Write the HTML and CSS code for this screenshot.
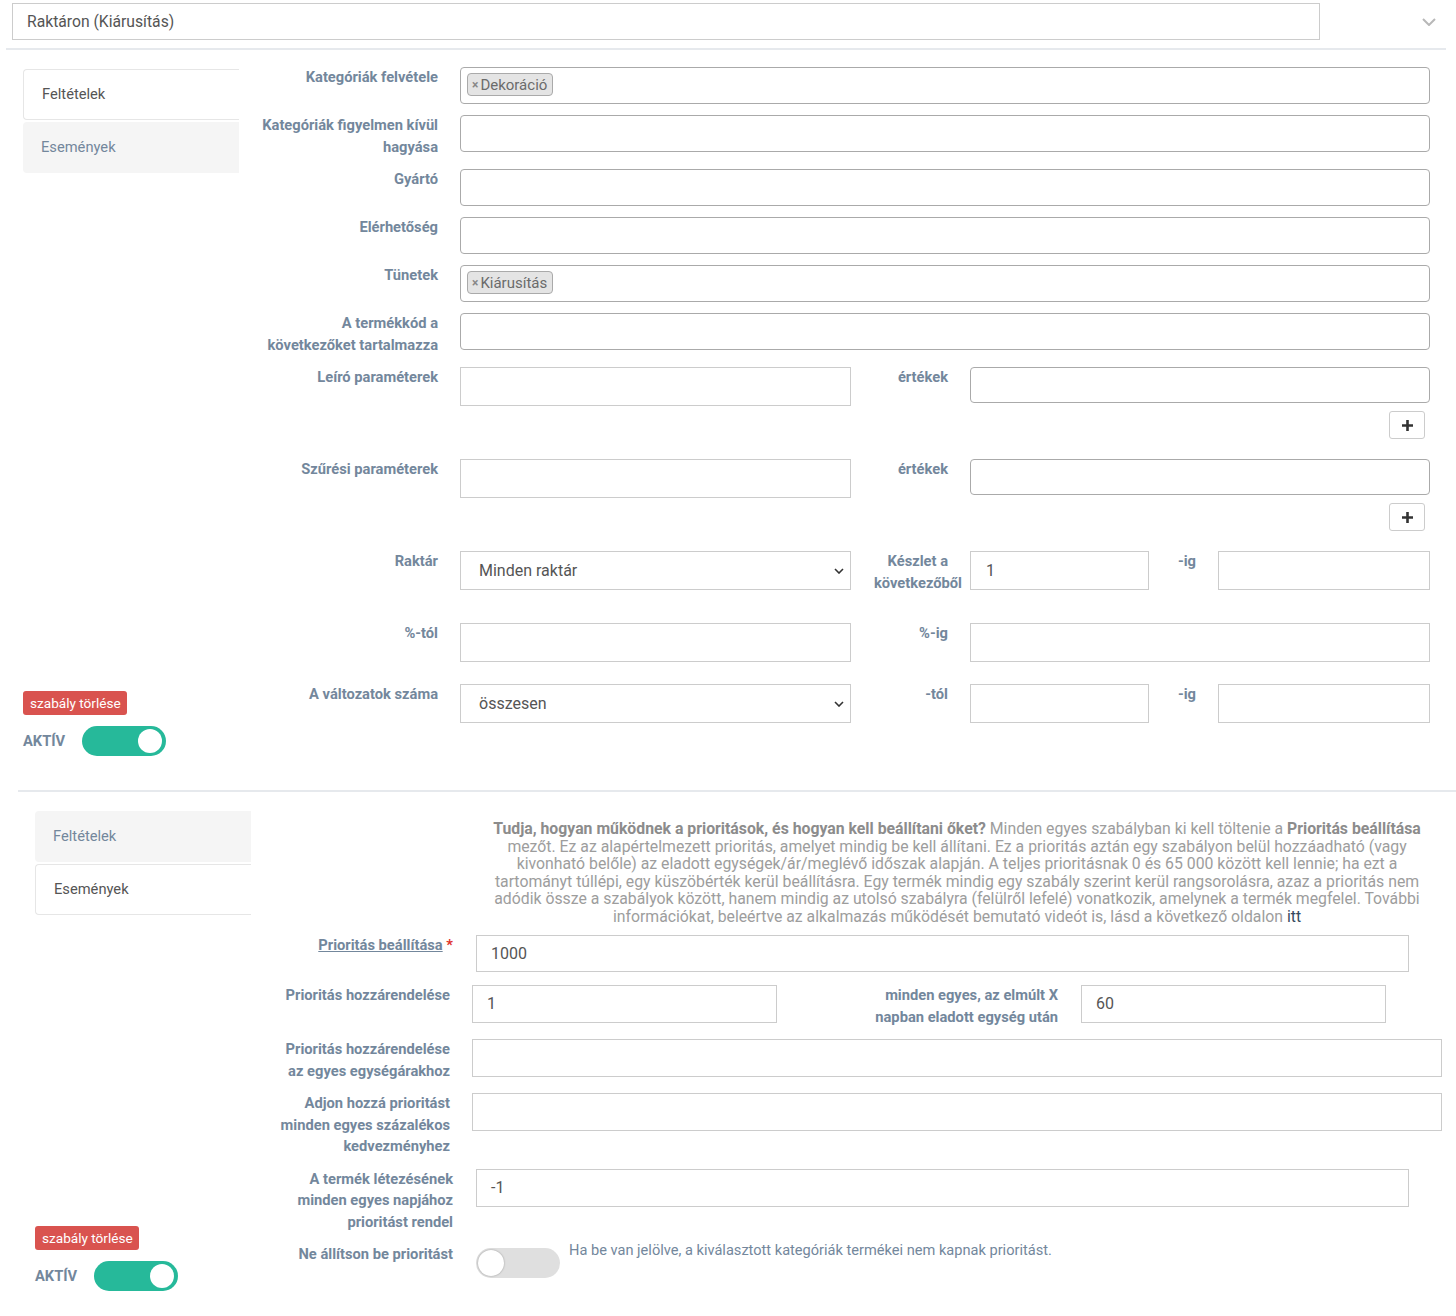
FILE: index.html
```html
<!DOCTYPE html>
<html lang="hu">
<head>
<meta charset="utf-8">
<title>Szabályok</title>
<link rel="stylesheet" href="styles.css">
</head>
<body>
<div class="head">
  <div class="head-input">Raktáron (Kiárusítás)</div>
  <svg class="head-chevron" width="14" height="8" viewBox="0 0 14 8"><path d="M1 1l6 6 6-6" fill="none" stroke="#b8b8b8" stroke-width="2"/></svg>
</div>

<section class="rule rule-1">
  <aside class="side">
    <div class="tabs">
      <div class="tab active">Feltételek</div>
      <div class="tab">Események</div>
    </div>
    <div class="side-bottom">
      <span class="btn-del">szabály törlése</span>
      <div class="aktiv"><span class="aktiv-lbl">AKTÍV</span><span class="switch on"></span></div>
    </div>
  </aside>
  <div class="form form-1">
    <div class="row">
      <div class="lbl">Kategóriák felvétele</div>
      <div class="s2"><span class="tag"><span class="tag-x">×</span>Dekoráció</span></div>
    </div>
    <div class="row">
      <div class="lbl">Kategóriák figyelmen kívül hagyása</div>
      <div class="s2"></div>
    </div>
    <div class="row">
      <div class="lbl">Gyártó</div>
      <div class="s2"></div>
    </div>
    <div class="row">
      <div class="lbl">Elérhetőség</div>
      <div class="s2"></div>
    </div>
    <div class="row">
      <div class="lbl">Tünetek</div>
      <div class="s2"><span class="tag"><span class="tag-x">×</span>Kiárusítás</span></div>
    </div>
    <div class="row">
      <div class="lbl">A termékkód a következőket tartalmazza</div>
      <div class="s2"></div>
    </div>
    <div class="row row-param">
      <div class="lbl">Leíró paraméterek</div>
      <div class="split">
        <div class="fc"></div>
        <div class="sub-lbl">értékek</div>
        <div class="vals">
          <div class="s2 s2-36"></div>
          <span class="add-btn"><svg width="11" height="11" viewBox="0 0 11 11"><path d="M5.5 0v11M0 5.5h11" stroke="#333" stroke-width="2.6"/></svg></span>
        </div>
      </div>
    </div>
    <div class="row row-param">
      <div class="lbl">Szűrési paraméterek</div>
      <div class="split">
        <div class="fc"></div>
        <div class="sub-lbl">értékek</div>
        <div class="vals">
          <div class="s2 s2-36"></div>
          <span class="add-btn"><svg width="11" height="11" viewBox="0 0 11 11"><path d="M5.5 0v11M0 5.5h11" stroke="#333" stroke-width="2.6"/></svg></span>
        </div>
      </div>
    </div>
    <div class="row row-stock">
      <div class="lbl">Raktár</div>
      <div class="split5">
        <div class="fc sel">Minden raktár<svg width="10" height="6" viewBox="0 0 10 6"><path d="M1 1l4 4 4-4" fill="none" stroke="#333" stroke-width="1.6"/></svg></div>
        <div class="sub-lbl">Készlet a következőből</div>
        <div class="fc val">1</div>
        <div class="sub-lbl">-ig</div>
        <div class="fc"></div>
      </div>
    </div>
    <div class="row row-pct">
      <div class="lbl">%-tól</div>
      <div class="split">
        <div class="fc"></div>
        <div class="sub-lbl">%-ig</div>
        <div class="fc"></div>
      </div>
    </div>
    <div class="row row-last">
      <div class="lbl">A változatok száma</div>
      <div class="split5">
        <div class="fc sel">összesen<svg width="10" height="6" viewBox="0 0 10 6"><path d="M1 1l4 4 4-4" fill="none" stroke="#333" stroke-width="1.6"/></svg></div>
        <div class="sub-lbl">-tól</div>
        <div class="fc"></div>
        <div class="sub-lbl">-ig</div>
        <div class="fc"></div>
      </div>
    </div>
  </div>
</section>

<div class="sep"></div>

<section class="rule rule-2">
  <aside class="side">
    <div class="tabs">
      <div class="tab">Feltételek</div>
      <div class="tab active">Események</div>
    </div>
    <div class="side-bottom">
      <span class="btn-del">szabály törlése</span>
      <div class="aktiv"><span class="aktiv-lbl">AKTÍV</span><span class="switch on"></span></div>
    </div>
  </aside>
  <div class="form form-2">
    <p class="info"><b>Tudja, hogyan működnek a prioritások, és hogyan kell beállítani őket?</b> Minden egyes szabályban ki kell töltenie a <b>Prioritás beállítása</b> mezőt. Ez az alapértelmezett prioritás, amelyet mindig be kell állítani. Ez a prioritás aztán egy szabályon belül hozzáadható (vagy kivonható belőle) az eladott egységek/ár/meglévő időszak alapján. A teljes prioritásnak 0 és 65 000 között kell lennie; ha ezt a tartományt túllépi, egy küszöbérték kerül beállításra. Egy termék mindig egy szabály szerint kerül rangsorolásra, azaz a prioritás nem adódik össze a szabályok között, hanem mindig az utolsó szabályra (felülről lefelé) vonatkozik, amelynek a termék megfelel. További információkat, beleértve az alkalmazás működését bemutató videót is, lásd a következő oldalon <a class="info-link" href="#">itt</a></p>
    <div class="row inset row-first">
      <div class="lbl"><span class="u">Prioritás beállítása</span> <span class="req">*</span></div>
      <div class="fc h37">1000</div>
    </div>
    <div class="row">
      <div class="lbl">Prioritás hozzárendelése</div>
      <div class="split-b">
        <div class="fc h38">1</div>
        <div class="sub-lbl sub-wide">minden egyes, az elmúlt X napban eladott egység után</div>
        <div class="fc h38">60</div>
      </div>
    </div>
    <div class="row">
      <div class="lbl">Prioritás hozzárendelése az egyes egységárakhoz</div>
      <div class="fc h38"></div>
    </div>
    <div class="row">
      <div class="lbl">Adjon hozzá prioritást minden egyes százalékos kedvezményhez</div>
      <div class="fc h38"></div>
    </div>
    <div class="row inset">
      <div class="lbl">A termék létezésének minden egyes napjához prioritást rendel</div>
      <div class="fc h38">-1</div>
    </div>
    <div class="row inset row-end">
      <div class="lbl">Ne állítson be prioritást</div>
      <div class="toggle-line">
        <span class="switch off"></span>
        <span class="help">Ha be van jelölve, a kiválasztott kategóriák termékei nem kapnak prioritást.</span>
      </div>
    </div>
  </div>
</section>
</body>
</html>
```

FILE: styles.css
```css
* { box-sizing: border-box; }

body {
  margin: 0;
  width: 1456px;
  background: #fff;
  font-family: Roboto, "Helvetica Neue", Arial, sans-serif;
  color: #73879C;
}

/* header */
.head {
  display: flex;
  align-items: center;
  width: 1440px;
  margin-left: 6px;
  padding: 3px 0 8px 6px;
  border-bottom: 2px solid #E6E9ED;
}
.head-input {
  width: 1308px;
  height: 37px;
  border: 1px solid #ccc;
  padding: 0 14px;
  font-size: 15.7px;
  line-height: 35px;
  color: #555;
}
.head-chevron { margin-left: auto; margin-right: 10px; }

/* rule sections */
.rule { display: flex; }
.rule-1 { margin-top: 17px; padding-left: 23px; }
.rule-2 { margin-top: 17px; padding-left: 35px; }

.sep {
  width: 1438px;
  margin: 34px 0 0 18px;
  border-top: 2px solid #E6E9ED;
}

/* sidebar */
.side {
  width: 216px;
  flex: none;
  display: flex;
  flex-direction: column;
}
.tabs {
  margin-top: 2px;
  display: flex;
  flex-direction: column;
  gap: 2px;
}
.tab {
  height: 51px;
  padding-left: 18px;
  font-size: 14.7px;
  line-height: 51px;
  background: #f5f5f5;
  color: #73879C;
  border-radius: 4px 0 0 4px;
}
.tab.active {
  background: #fff;
  color: #555;
  border: 1px solid #e6e6e6;
  border-right: none;
  line-height: 49px;
}
.side-bottom { margin-top: auto; }
.btn-del {
  display: inline-block;
  height: 24px;
  padding: 0 6px 0 7px;
  background: #d9534f;
  border-radius: 3px;
  color: #fff;
  font-size: 13.6px;
  line-height: 24px;
}
.aktiv {
  display: flex;
  align-items: center;
  gap: 17px;
  margin-top: 11px;
}
.aktiv-lbl { font-weight: 700; font-size: 14.7px; color: #73879C; }

.switch {
  position: relative;
  display: inline-block;
  width: 84px;
  height: 30px;
  border-radius: 15px;
  flex: none;
}
.switch.on { background: #26B99A; }
.switch.on::after {
  content: "";
  position: absolute;
  top: 3px;
  right: 4px;
  width: 24px;
  height: 24px;
  border-radius: 50%;
  background: #fff;
}
.switch.off { background: #dfdfdf; }
.switch.off::after {
  content: "";
  position: absolute;
  top: 2px;
  left: 2px;
  width: 26px;
  height: 26px;
  border-radius: 50%;
  background: #fff;
  box-shadow: 0 0 2px rgba(0,0,0,.35);
}

/* form */
.form { width: 1191px; }
.form-1 { padding-bottom: 33px; }
.form-2 { padding-bottom: 13px; }

.row {
  display: grid;
  grid-template-columns: 199px 970px;
  column-gap: 22px;
  align-items: start;
  margin-bottom: 11px;
}
.row.inset {
  grid-template-columns: 202px 933px;
  column-gap: 23px;
}
.row.inset .lbl { padding-left: 18px; }
.row-param { margin-bottom: 20px; }
.row-stock { margin-bottom: 29px; }
.row-pct { margin-bottom: 22px; }
.row-last { margin-bottom: 0; }
.row-first { margin-bottom: 13px; }
.row-end { margin-bottom: 0; }

.lbl, .sub-lbl {
  font-weight: 700;
  font-size: 14.7px;
  line-height: 21.5px;
  color: #73879C;
  text-align: right;
}
.lbl { padding-left: 20px; }
.sub-lbl { padding: 0 22px 0 23px; }
.sub-wide { padding: 0 23px 0 97px; }

.u { text-decoration: underline; }
.req { color: #e0312b; }

.split {
  display: grid;
  grid-template-columns: 391px 119px 460px;
  align-items: start;
}
.split5 {
  display: grid;
  grid-template-columns: 391px 119px 179px 69px 212px;
  align-items: start;
}
.split-b {
  display: grid;
  grid-template-columns: 305px 304px 305px;
  align-items: start;
}

/* inputs */
.s2 {
  height: 37px;
  border: 1px solid #aaa;
  border-radius: 4px;
  background: #fff;
  padding: 5px 6px;
}
.s2-36 { height: 36px; width: 100%; }
.tag {
  display: inline-flex;
  align-items: center;
  height: 23px;
  padding: 0 5px 0 4px;
  background: #e4e4e4;
  border: 1px solid #aaa;
  border-radius: 4px;
  font-size: 15px;
  color: #6b6b6b;
}
.tag-x {
  font-weight: 700;
  font-size: 12px;
  color: #888;
  margin-right: 2px;
}

.fc {
  height: 39px;
  border: 1px solid #ccc;
  background: #fff;
  padding: 0 14px;
  font-size: 16px;
  line-height: 37px;
  color: #555;
}
.fc.h37 { height: 37px; line-height: 35px; }
.fc.h38 { height: 38px; line-height: 36px; }
.fc.sel {
  display: flex;
  align-items: center;
  justify-content: space-between;
  padding: 0 6px 0 18px;
}
.fc.val { padding-left: 15px; }

.vals {
  display: flex;
  flex-direction: column;
  align-items: flex-end;
}
.add-btn {
  display: flex;
  align-items: center;
  justify-content: center;
  width: 36px;
  height: 28px;
  margin: 8px 5px 0 0;
  border: 1px solid #ccc;
  border-radius: 3px;
  background: #fff;
}

/* info */
.info {
  margin: 11px 0 10px 236px;
  width: 940px;
  text-align: center;
  font-size: 15.8px;
  line-height: 17.5px;
  color: #9d9d9d;
}
.info b { color: #8c8c8c; font-weight: 700; }
.info-link { color: #34495e; text-decoration: none; }

.toggle-line {
  display: flex;
  align-items: flex-start;
  padding-top: 4px;
}
.help {
  margin: -8px 0 0 9px;
  font-size: 14.6px;
  line-height: 20px;
  color: #73879C;
}
```
